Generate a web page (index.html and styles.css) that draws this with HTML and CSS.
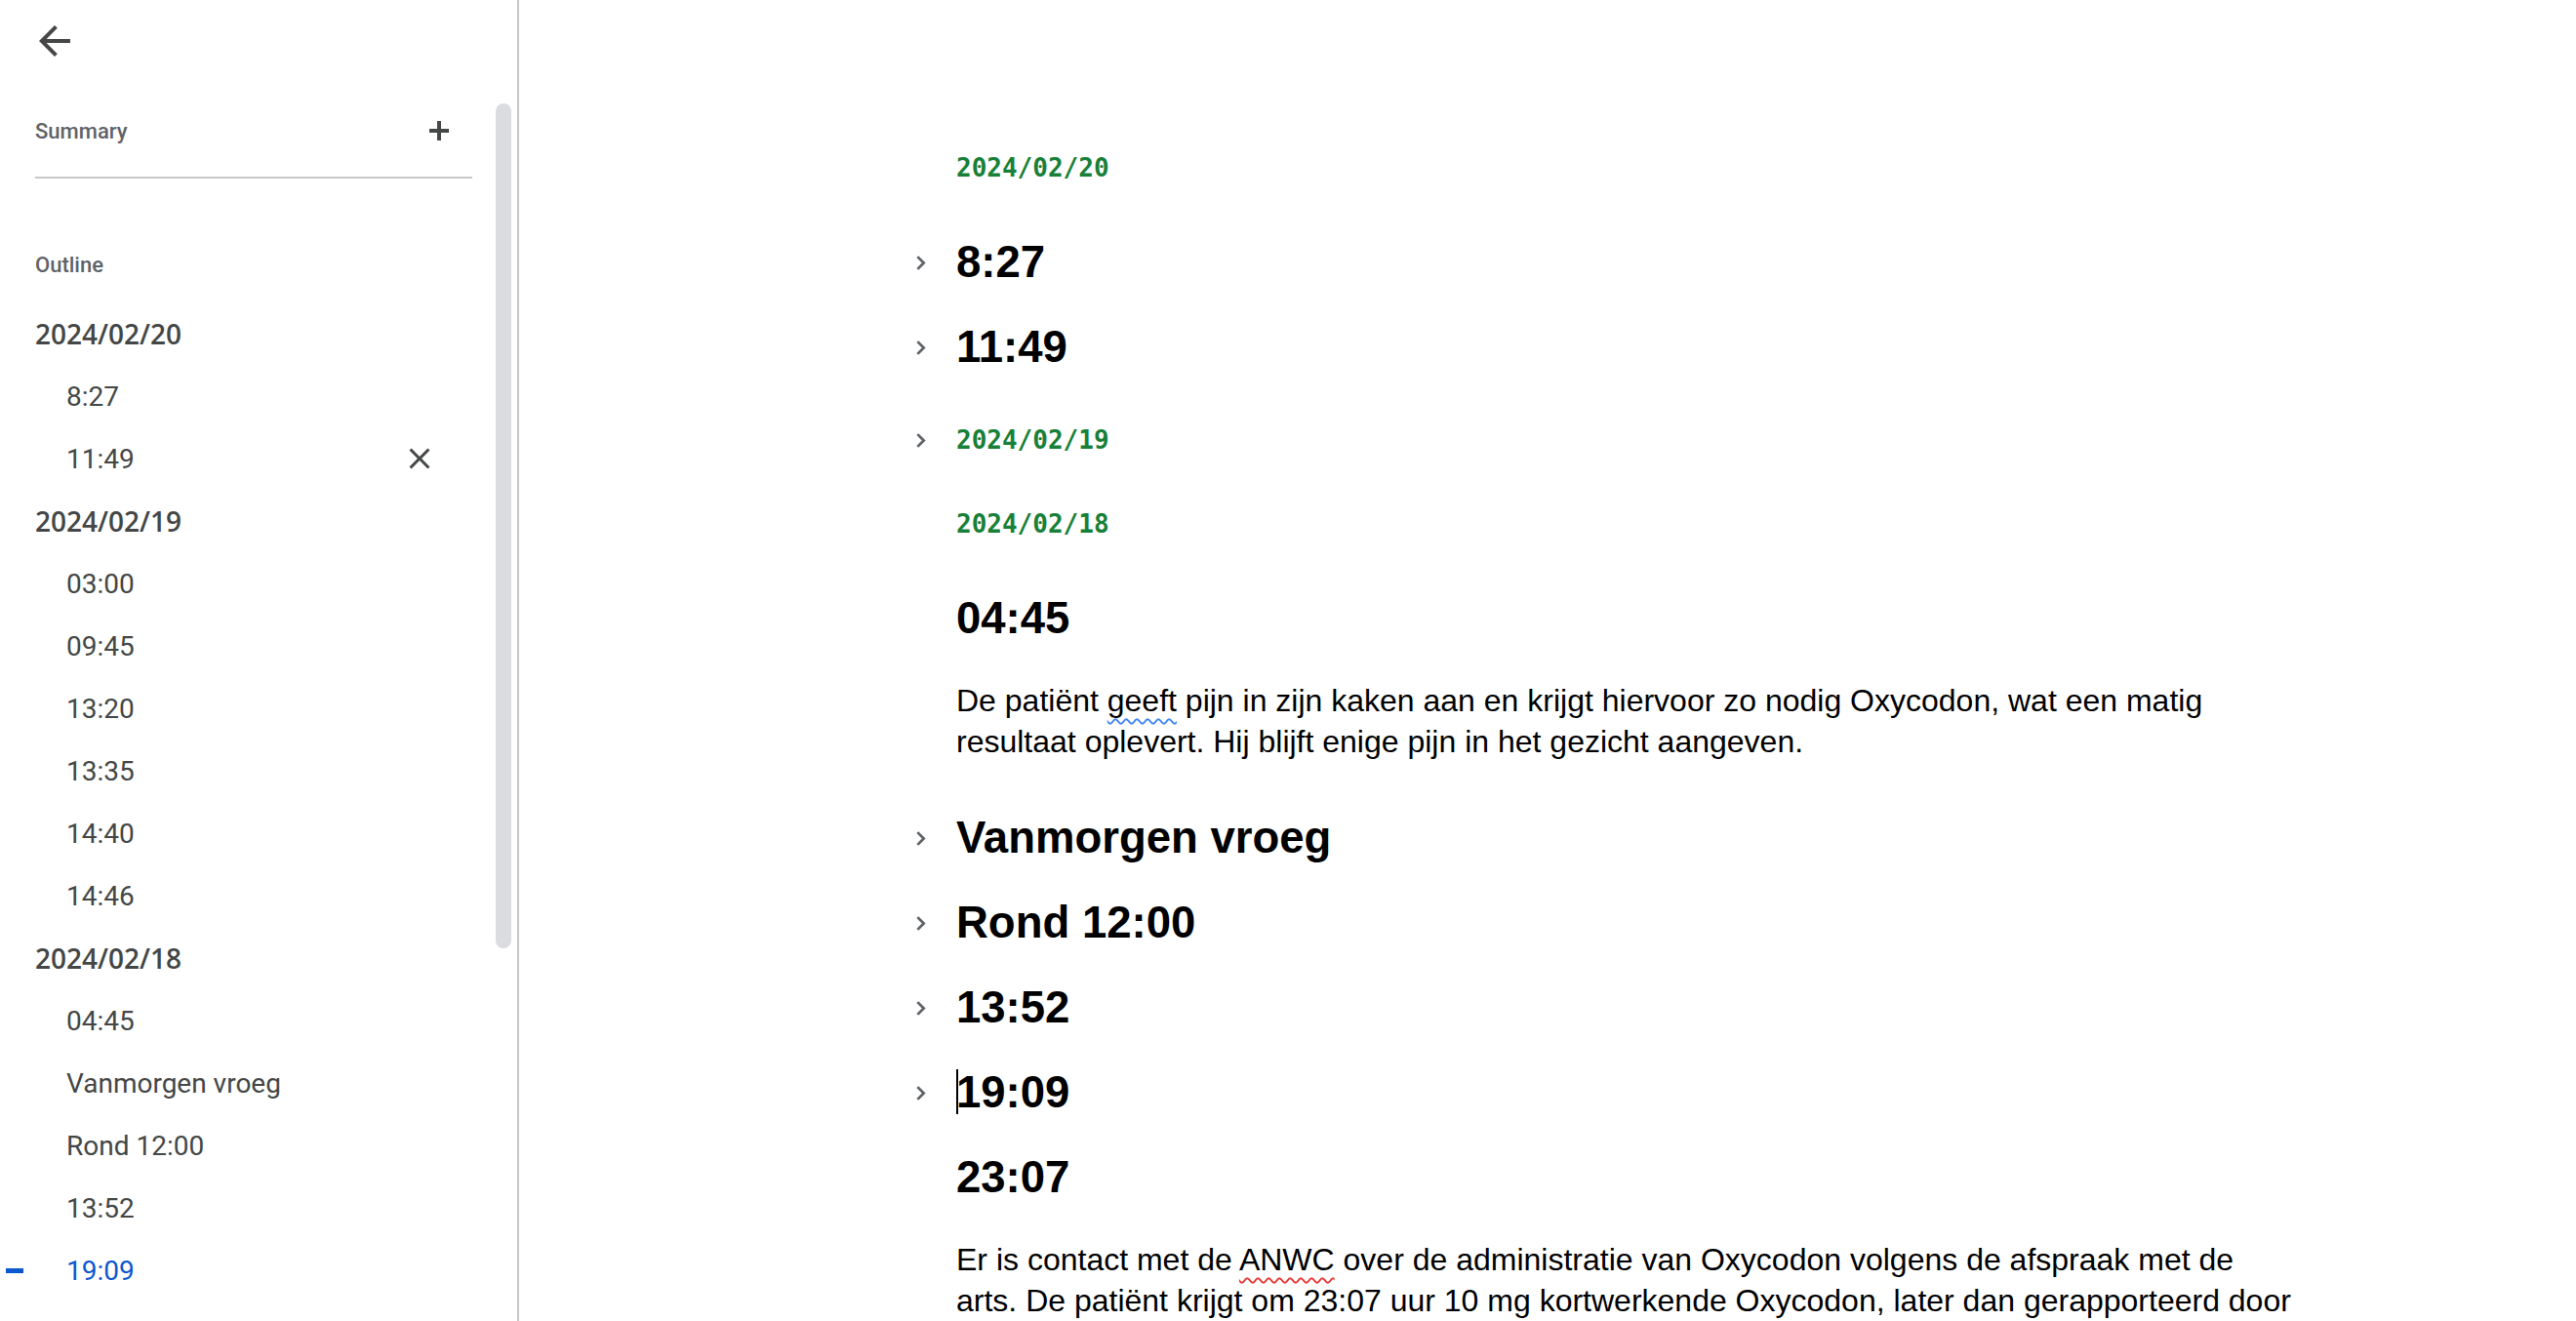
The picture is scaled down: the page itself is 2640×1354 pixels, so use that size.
FILE: index.html
```html
<!DOCTYPE html>
<html lang="nl">
<head>
<meta charset="utf-8">
<title>Outline</title>
<link rel="stylesheet" href="styles.css">
</head>
<body>
<div class="app">
  <aside class="sidebar">
    <button class="back" aria-label="Terug">
      <svg viewBox="0 0 24 24" width="48" height="48"><path fill="#444746" d="M20 11H7.83l5.59-5.59L12 4l-8 8 8 8 1.41-1.41L7.83 13H20v-2z"/></svg>
    </button>
    <div class="summary-row">
      <span class="label">Summary</span>
      <svg class="add" viewBox="0 0 20 20" width="20" height="20"><rect x="8" y="0" width="4" height="20" fill="#444746"/><rect x="0" y="8" width="20" height="4" fill="#444746"/></svg>
    </div>
    <div class="divider"></div>
    <div class="label outline-label">Outline</div>
    <ul class="outline">
      <li class="o-date">2024/02/20</li>
      <li class="o-item">8:27</li>
      <li class="o-item">11:49<svg class="close" viewBox="0 0 24 24" width="36" height="36"><path fill="#444746" d="M19 6.41L17.590 5 12 10.59 6.41 5 5 6.41 10.59 12 5 17.59 6.41 19 12 13.41 17.59 19 19 17.59 13.41 12z"/></svg></li>
      <li class="o-date">2024/02/19</li>
      <li class="o-item">03:00</li>
      <li class="o-item">09:45</li>
      <li class="o-item">13:20</li>
      <li class="o-item">13:35</li>
      <li class="o-item">14:40</li>
      <li class="o-item">14:46</li>
      <li class="o-date">2024/02/18</li>
      <li class="o-item">04:45</li>
      <li class="o-item">Vanmorgen vroeg</li>
      <li class="o-item">Rond 12:00</li>
      <li class="o-item">13:52</li>
      <li class="o-item active"><span class="marker"></span>19:09</li>
      <li class="o-item">23:07</li>
    </ul>
    <div class="scroll-thumb"></div>
  </aside>
  <main class="doc">
    <div class="doc-inner">
      <div class="row date"><span class="chev-slot"></span><span>2024/02/20</span></div>
      <div class="row heading"><span class="chev-slot"><svg class="chev" viewBox="0 0 10 16"><path d="M2 2l6 6-6 6" fill="none" stroke="#5f6368" stroke-width="2.6"/></svg></span><span>8:27</span></div>
      <div class="row heading"><span class="chev-slot"><svg class="chev" viewBox="0 0 10 16"><path d="M2 2l6 6-6 6" fill="none" stroke="#5f6368" stroke-width="2.6"/></svg></span><span>11:49</span></div>
      <div class="row date"><span class="chev-slot"><svg class="chev" viewBox="0 0 10 16"><path d="M2 2l6 6-6 6" fill="none" stroke="#5f6368" stroke-width="2.6"/></svg></span><span>2024/02/19</span></div>
      <div class="row date"><span class="chev-slot"></span><span>2024/02/18</span></div>
      <div class="row heading"><span class="chev-slot"></span><span>04:45</span></div>
      <p class="para">De patiënt <span class="spell">geeft</span> pijn in zijn kaken aan en krijgt hiervoor zo nodig Oxycodon, wat een matig resultaat oplevert. Hij blijft enige pijn in het gezicht aangeven.</p>
      <div class="row heading"><span class="chev-slot"><svg class="chev" viewBox="0 0 10 16"><path d="M2 2l6 6-6 6" fill="none" stroke="#5f6368" stroke-width="2.6"/></svg></span><span>Vanmorgen vroeg</span></div>
      <div class="row heading"><span class="chev-slot"><svg class="chev" viewBox="0 0 10 16"><path d="M2 2l6 6-6 6" fill="none" stroke="#5f6368" stroke-width="2.6"/></svg></span><span>Rond 12:00</span></div>
      <div class="row heading"><span class="chev-slot"><svg class="chev" viewBox="0 0 10 16"><path d="M2 2l6 6-6 6" fill="none" stroke="#5f6368" stroke-width="2.6"/></svg></span><span>13:52</span></div>
      <div class="row heading"><span class="chev-slot"><svg class="chev" viewBox="0 0 10 16"><path d="M2 2l6 6-6 6" fill="none" stroke="#5f6368" stroke-width="2.6"/></svg></span><span><span class="caret"></span>19:09</span></div>
      <div class="row heading"><span class="chev-slot"></span><span>23:07</span></div>
      <p class="para">Er is contact met de <span class="spell err">ANWC</span> over de administratie van Oxycodon volgens de afspraak met de arts. De patiënt krijgt om 23:07 uur 10 mg kortwerkende Oxycodon, later dan gerapporteerd door de dienstdoende verpleegkundige van de avonddienst.</p>
    </div>
  </main>
</div>
</body>
</html>
```

FILE: styles.css
```css
html, body {
  margin: 0;
  padding: 0;
  background: #ffffff;
}
body {
  font-family: Roboto, "Liberation Sans", Arial, sans-serif;
  overflow: hidden;
  height: 1354px;
}
.app {
  display: flex;
  height: 1354px;
}

/* ---------- sidebar ---------- */
.sidebar {
  width: 530px;
  flex: none;
  border-right: 2px solid #c7c7c7;
  position: relative;
  display: flex;
  flex-direction: column;
  overflow: hidden;
}
.sidebar > * {
  flex-shrink: 0;
}
.back {
  margin: 18px 0 0 32px;
  width: 48px;
  height: 48px;
  padding: 0;
  border: none;
  background: none;
  display: block;
}
.back svg {
  display: block;
}
.summary-row {
  margin: 55px 0 0 36px;
  width: 448px;
  height: 28px;
  display: flex;
  align-items: center;
  justify-content: space-between;
}
.label {
  font-family: Roboto, sans-serif;
  font-size: 22px;
  font-weight: 500;
  line-height: 28px;
  color: #5f6368;
}
.add {
  display: block;
  margin-right: 24px;
  margin-top: -2px;
}
.divider {
  margin: 32px 0 0 36px;
  width: 448px;
  height: 2px;
  background: #c7c7c7;
}
.outline-label {
  margin: 75px 0 0 36px;
}
.outline {
  list-style: none;
  margin: 24px 0 0 36px;
  padding: 0;
  width: 448px;
}
.outline li {
  height: 64px;
  display: flex;
  align-items: center;
  justify-content: space-between;
  position: relative;
  font-size: 28px;
  color: #444746;
  white-space: nowrap;
}
.o-date {
  font-family: "Open Sans", Roboto, sans-serif;
  font-weight: 600;
  font-size: 27px;
  color: #3c4043;
}
.o-item {
  padding-left: 32px;
  font-family: Roboto, sans-serif;
}
.close {
  display: block;
  margin-right: 36px;
}
.o-item.active {
  color: #0b57d0;
}
.marker {
  position: absolute;
  left: -30px;
  top: 30px;
  width: 18px;
  height: 5px;
  background: #0b57d0;
}
.scroll-thumb {
  position: absolute;
  left: 508px;
  top: 106px;
  width: 16px;
  height: 866px;
  border-radius: 8px;
  background: #dadce0;
}

/* ---------- document ---------- */
.doc {
  flex: 1;
  padding: 155px 0 0 448px;
  overflow: hidden;
}
.doc-inner {
  width: 1375px;
}
.row {
  display: flex;
  align-items: center;
  margin-left: -61px;
}
.chev-slot {
  width: 48px;
  margin-right: 13px;
  flex: none;
  display: flex;
  justify-content: center;
  align-items: center;
}
.chev {
  display: block;
  width: 11px;
  height: 17px;
}
.date {
  margin-top: 52px;
  font-family: "DejaVu Sans Mono", "Liberation Mono", monospace;
  font-weight: 700;
  font-size: 26px;
  line-height: 34px;
  color: #188038;
}
.date:first-child {
  margin-top: 0;
}
.heading {
  margin-top: 35px;
  font-family: "Liberation Sans", Arial, sans-serif;
  font-weight: 700;
  font-size: 45.5px;
  line-height: 52px;
  color: #000000;
}
.date + .heading {
  margin-top: 54px;
}
.para + .heading {
  margin-top: 52px;
}
.para {
  margin: 37px 0 0 0;
  font-family: "Liberation Sans", Arial, sans-serif;
  font-size: 32px;
  line-height: 42px;
  color: #000000;
}
.spell {
  text-decoration: underline wavy #4285f4;
  text-decoration-thickness: 2px;
  text-underline-offset: 7px;
}
.spell.err {
  text-decoration-color: #e53935;
}
.caret {
  display: inline-block;
  width: 2px;
  height: 46px;
  margin-right: -2px;
  background: #000000;
  vertical-align: -7px;
}
```
